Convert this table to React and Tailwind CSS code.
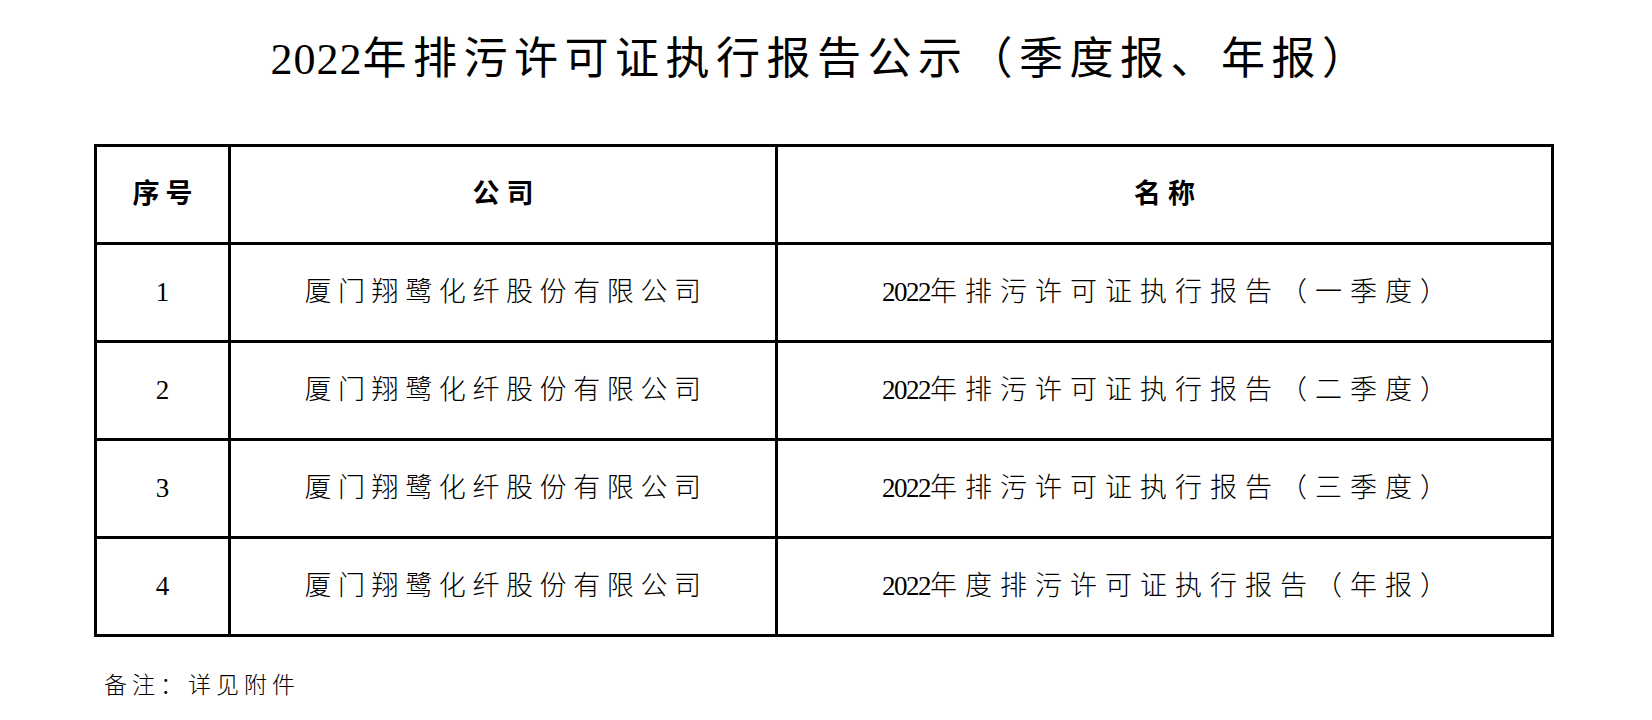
import React from "react";

const rows = [
  { no: "1", company: "厦门翔鹭化纤股份有限公司", year: "2022", name: "年排污许可证执行报告（一季度）" },
  { no: "2", company: "厦门翔鹭化纤股份有限公司", year: "2022", name: "年排污许可证执行报告（二季度）" },
  { no: "3", company: "厦门翔鹭化纤股份有限公司", year: "2022", name: "年排污许可证执行报告（三季度）" },
  { no: "4", company: "厦门翔鹭化纤股份有限公司", year: "2022", name: "年度排污许可证执行报告（年报）" },
];

export default function App() {
  return (
    <div
      className="w-[1652px] min-h-[720px] bg-white text-black pt-[38px]"
      style={{ fontFamily: '"Liberation Serif", "Noto Sans CJK SC", serif' }}
    >
      <h1 className="text-center text-[44px] leading-none tracking-[6.5px] pr-[9px]">
        <span className="tracking-[1px]">2022</span>年排污许可证执行报告公示（季度报、年报）
      </h1>

      <table className="ml-[94px] mt-[62px] w-[1457px] border-collapse border-[3px] border-black table-fixed">
        <colgroup>
          <col className="w-[134px]" />
          <col className="w-[547px]" />
          <col className="w-[776px]" />
        </colgroup>
        <thead>
          <tr className="h-[98px]">
            <th className="border-[3px] border-black text-[27px] font-semibold tracking-[6px] pl-[6px]">序号</th>
            <th className="border-[3px] border-black text-[27px] font-semibold tracking-[7px] pl-[7px]">公司</th>
            <th className="border-[3px] border-black text-[27px] font-semibold tracking-[7px] pl-[7px]">名称</th>
          </tr>
        </thead>
        <tbody>
          {rows.map((r) => (
            <tr key={r.no} className="h-[98px]">
              <td className="border-[3px] border-black text-center text-[27px] font-light">{r.no}</td>
              <td className="border-[3px] border-black text-center text-[27px] font-light tracking-[6.6px] pl-[6px]">
                {r.company}
              </td>
              <td className="border-[3px] border-black text-center text-[27px] font-light tracking-[8px] pl-[8px]">
                <span className="tracking-[-1.5px]">{r.year}</span>
                {r.name}
              </td>
            </tr>
          ))}
        </tbody>
      </table>

      <p className="ml-[104px] mt-[37px] text-[23px] leading-none tracking-[5px] font-light">备注：详见附件</p>
    </div>
  );
}
